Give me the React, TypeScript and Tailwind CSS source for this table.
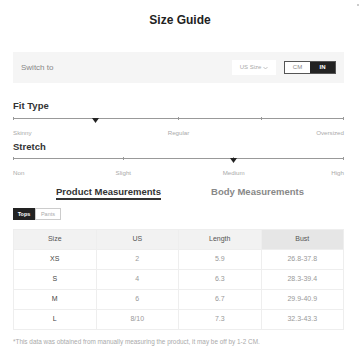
import React, { useState } from 'react';

interface Row {
  size: string;
  us: string;
  length: string;
  bust: string;
}

const rows: Row[] = [
  { size: 'XS', us: '2', length: '5.9', bust: '26.8-37.8' },
  { size: 'S', us: '4', length: '6.3', bust: '28.3-39.4' },
  { size: 'M', us: '6', length: '6.7', bust: '29.9-40.9' },
  { size: 'L', us: '8/10', length: '7.3', bust: '32.3-43.3' },
];

interface ScaleProps {
  ticks: number[];
  marker: number;
  labels: { text: string; at: number; align: 'left' | 'center' | 'right' }[];
}

// one of the fit / stretch scales
const Scale: React.FC<ScaleProps> = ({ ticks, marker, labels }) => (
  <div className="relative h-[24px] w-[331px]">
    <div className="absolute left-0 right-0 top-[4px] h-px bg-[#999]" />
    {ticks.map((t) => (
      <div
        key={t}
        className="absolute top-[3px] h-[3px] w-px bg-[#999]"
        style={{ left: `${t * 330}px` }}
      />
    ))}
    <svg
      className="absolute top-[4px]"
      style={{ left: `${marker * 331 - 3.5}px` }}
      width="7"
      height="5"
      viewBox="0 0 7 5"
    >
      <path d="M0 0 H7 L3.5 5 Z" fill="#222" />
    </svg>
    {labels.map((l) => (
      <span
        key={l.text}
        className={`absolute top-[15px] whitespace-nowrap text-[6.2px] leading-[7px] text-[#aaa] ${
          l.align === 'left' ? '' : l.align === 'center' ? '-translate-x-1/2' : '-translate-x-full'
        }`}
        style={{ left: `${l.at * 331}px` }}
      >
        {l.text}
      </span>
    ))}
  </div>
);

const App: React.FC = () => {
  const [unit, setUnit] = useState<'CM' | 'IN'>('IN');
  const [tab, setTab] = useState<'product' | 'body'>('product');
  const [part, setPart] = useState<'Tops' | 'Pants'>('Tops');

  return (
    <div className="relative h-[360px] w-[360px] overflow-hidden bg-white font-['Liberation_Sans',Arial,sans-serif]">
      <div className="absolute right-[1px] top-[4px] h-[2px] w-[2px] bg-[#ccc]" />

      <h1 className="pt-[13px] text-center text-[12px] font-bold leading-[14px] text-[#222]">Size Guide</h1>

      <div className="mx-[13px] mt-[25px] flex h-[31px] w-[331px] items-center bg-[#f5f5f5] pl-[8px] pr-[8px]">
        <span className="text-[8px] text-[#888]">Switch to</span>
        <div className="ml-auto flex h-[15px] w-[44px] items-center justify-center gap-[2px] bg-white text-[6px] text-[#aaa]">
          US Size
          <svg width="5" height="4" viewBox="0 0 5 4">
            <path d="M0.5 1 L2.5 3 L4.5 1" fill="none" stroke="#aaa" strokeWidth="0.7" />
          </svg>
        </div>
        <div className="ml-[8px] flex h-[13px] border border-[#555] text-[6px]">
          <button
            onClick={() => setUnit('CM')}
            className={`flex w-[25px] items-center justify-center ${unit === 'CM' ? 'bg-[#222] font-bold text-white' : 'bg-white text-[#888]'}`}
          >
            CM
          </button>
          <button
            onClick={() => setUnit('IN')}
            className={`flex w-[25px] items-center justify-center ${unit === 'IN' ? 'bg-[#222] font-bold text-white' : 'bg-white text-[#888]'}`}
          >
            IN
          </button>
        </div>
      </div>

      <div className="px-[13px]">
        <h2 className="mt-[17px] text-[9.5px] font-bold leading-[11px] text-[#333]">Fit Type</h2>
        <div className="mt-[3px]">
          <Scale
            ticks={[0, 0.5, 0.75, 1]}
            marker={0.25}
            labels={[
              { text: 'Skinny', at: 0, align: 'left' },
              { text: 'Regular', at: 0.5, align: 'center' },
              { text: 'Oversized', at: 1, align: 'right' },
            ]}
          />
        </div>

        <h2 className="mt-[3px] text-[9.5px] font-bold leading-[11px] text-[#333]">Stretch</h2>
        <div className="mt-[2px]">
          <Scale
            ticks={[0, 1 / 3, 2 / 3, 1]}
            marker={2 / 3}
            labels={[
              { text: 'Non', at: 0, align: 'left' },
              { text: 'Slight', at: 1 / 3, align: 'center' },
              { text: 'Medium', at: 2 / 3, align: 'center' },
              { text: 'High', at: 1, align: 'right' },
            ]}
          />
        </div>

        <div className="mt-[8px] flex justify-center gap-[50px]">
          <button
            onClick={() => setTab('product')}
            className={`border-b-2 pb-[1px] text-[9.5px] font-bold leading-[11px] ${tab === 'product' ? 'border-[#333] text-[#333]' : 'border-transparent text-[#888]'}`}
          >
            Product Measurements
          </button>
          <button
            onClick={() => setTab('body')}
            className={`border-b-2 pb-[1px] text-[9.5px] font-bold leading-[11px] ${tab === 'body' ? 'border-[#333] text-[#333]' : 'border-transparent text-[#888]'}`}
          >
            Body Measurements
          </button>
        </div>

        <div className="mt-[8px] flex h-[12px] text-[5.5px]">
          <button
            onClick={() => setPart('Tops')}
            className={`w-[22px] border ${part === 'Tops' ? 'border-[#222] bg-[#222] font-bold text-white' : 'border-[#ccc] bg-white text-[#aaa]'}`}
          >
            Tops
          </button>
          <button
            onClick={() => setPart('Pants')}
            className={`w-[26px] border ${part === 'Pants' ? 'border-[#222] bg-[#222] font-bold text-white' : 'border-[#ccc] bg-white text-[#aaa]'}`}
          >
            Pants
          </button>
        </div>

        <table className="mt-[9px] w-[331px] table-fixed border-collapse text-[7px]">
          <thead>
            <tr className="h-[20px] text-[#555]">
              <th className="border border-[#eee] bg-[#f2f2f2] font-normal">Size</th>
              <th className="border border-[#eee] bg-[#f2f2f2] font-normal">US</th>
              <th className="border border-[#eee] bg-[#f2f2f2] font-normal">Length</th>
              <th className="border border-[#eee] bg-[#e6e6e6] font-normal">Bust</th>
            </tr>
          </thead>
          <tbody>
            {rows.map((r) => (
              <tr key={r.size} className="h-[20px] text-center text-[#999]">
                <td className="border border-[#eee] text-[#444]">{r.size}</td>
                <td className="border border-[#eee]">{r.us}</td>
                <td className="border border-[#eee]">{r.length}</td>
                <td className="border border-[#eee]">{r.bust}</td>
              </tr>
            ))}
          </tbody>
        </table>

        <p className="mt-[7px] whitespace-nowrap text-[6.4px] text-[#aaa]">
          *This data was obtained from manually measuring the product, it may be off by 1-2 CM.
        </p>
      </div>
    </div>
  );
};

export default App;
